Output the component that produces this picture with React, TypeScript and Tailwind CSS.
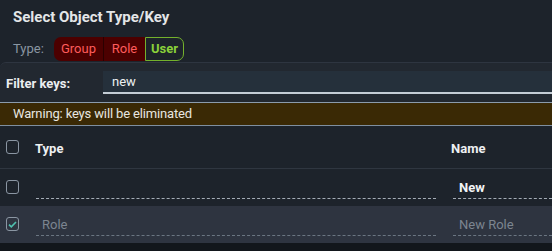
import React from "react";

function Check({ checked }: { checked?: boolean }) {
  return (
    <div className="w-[13px] h-[14px] rounded-[3px] border border-[#8b96a3] flex items-center justify-center">
      {checked && (
        <svg width="9" height="7" viewBox="0 0 9 7" fill="none">
          <path d="M1 3.6 L3.3 5.8 L8 1" stroke="#4fc1b0" strokeWidth="1.6" />
        </svg>
      )}
    </div>
  );
}

export default function App() {
  return (
    <div
      className="w-[552px] h-[251px] overflow-hidden bg-[#1d232b] text-[#e6e8ea]"
      style={{ fontFamily: "Roboto, 'Liberation Sans', sans-serif" }}
    >
      <div className="h-[62px] pl-[13px] pt-[8px]">
        <div className="text-[15px] font-bold leading-[18px] text-[#e4e6e8]">Select Object Type/Key</div>
        <div className="flex items-center mt-[11px] h-[24px]">
          <span className="text-[13px] text-[#8a96a2] w-[41px]">Type:</span>
          <div className="flex h-[24px] text-[13px]">
            <div className="w-[50px] flex items-center justify-center bg-[#4c0000] text-[#ff5c5c] rounded-l-[7px] border-r border-[#2a0000]">Group</div>
            <div className="w-[41px] flex items-center justify-center bg-[#4c0000] text-[#ff5c5c]">Role</div>
            <div className="w-[39px] flex items-center justify-center border border-[#74b12c] text-[#8ad13a] font-bold rounded-r-[7px]">User</div>
          </div>
        </div>
      </div>
      <div className="border-t border-[#2e3540] bg-[#222830] rounded-tl-[6px] h-[40px] flex items-start">
        <div className="w-[103px] pl-[6px] pt-[11px] text-[13px] font-bold text-[#eceef0]">Filter keys:</div>
        <div className="flex-1 mt-[8px] h-[23px] bg-[#25303b] border-b-2 border-[#c4ccd4] pl-[9px] text-[13px] leading-[21px] text-[#eef0f2]">new</div>
      </div>
      <div className="border-t border-[#8b9cad] bg-[#3a2905] h-[23px] pl-[13px] text-[13px] leading-[22px] text-[#e8e6e0] tracking-[-0.15px]">
        Warning: keys will be eliminated
      </div>
      <div className="border-t border-[#7f8fa0] h-[44px] flex items-center border-b border-b-[#2f3640]">
        <div className="w-[36px] pl-[6px]">
          <Check />
        </div>
        <div className="w-[416px] pt-[3px] text-[13px] font-bold text-[#eef0f2] -ml-[1px]">Type</div>
        <div className="pt-[3px] text-[13px] font-bold text-[#eef0f2]">Name</div>
      </div>
      <div className="h-[37px] flex items-start">
        <div className="w-[36px] pl-[6px] pt-[11px]">
          <Check />
        </div>
        <div className="w-[400px] h-[30px] border-b border-dashed border-[#a4acb6]"></div>
        <div className="ml-[17px] flex-1 h-[30px] border-b border-dashed border-[#a4acb6] pl-[6px] pt-[9px] text-[13px] font-bold text-[#f2f4f6]">New</div>
      </div>
      <div className="h-[37px] flex items-start bg-[#2e3440]">
        <div className="w-[36px] pl-[6px] pt-[11px]">
          <Check checked />
        </div>
        <div className="w-[400px] h-[30px] border-b border-dashed border-[#6b7682] pl-[6px] pt-[9px] text-[13px] text-[#7c8590]">Role</div>
        <div className="ml-[17px] flex-1 h-[30px] border-b border-dashed border-[#6b7682] pl-[6px] pt-[9px] text-[13px] text-[#7c8590]">New Role</div>
      </div>
      <div className="h-[20px] bg-[#12161b]"></div>
    </div>
  );
}
